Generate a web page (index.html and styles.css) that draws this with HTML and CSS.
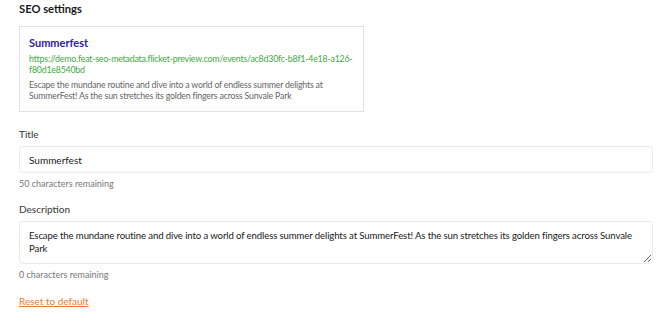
FILE: index.html
```html
<!DOCTYPE html>
<html lang="en">
<head>
  <meta charset="UTF-8" />
  <title>SEO settings</title>
  <link rel="stylesheet" href="styles.css">
</head>
<body>
  <div class="seo">
    <h3>SEO settings</h3>

    <!-- Search preview -->
    <div class="preview">
      <div class="preview-title">Summerfest</div>
      <div class="preview-url">https://demo.feat-seo-metadata.flicket-preview.com/events/ac8d30fc-b8f1-4e18-a126-f80d1e8540bd</div>
      <div class="preview-desc">Escape the mundane routine and dive into a world of endless summer delights at SummerFest! As the sun stretches its golden fingers across Sunvale Park</div>
    </div>

    <div class="field">
      <label for="seoTitle">Title</label>
      <input id="seoTitle" type="text" value="Summerfest" />
      <div class="hint">50 characters remaining</div>
    </div>

    <div class="field last">
      <label for="seoDesc">Description</label>
      <textarea id="seoDesc" rows="2">Escape the mundane routine and dive into a world of endless summer delights at SummerFest! As the sun stretches its golden fingers across Sunvale Park</textarea>
      <div class="hint">0 characters remaining</div>
    </div>

    <a href="#" class="reset">Reset to default</a>
  </div>
</body>
</html>
```

FILE: styles.css
```css
body {
  margin: 0;
  font-family: Lato, "Noto Sans", sans-serif;
  color: #1a1a1a;
  background: #fff;
}

.seo {
  padding: 2px 17px 0 19px;
}

h3 {
  margin: 0 0 10px;
  font-size: 11.2px;
  font-weight: 700;
  line-height: 14px;
}

.preview {
  width: 325px;
  border: 1px solid #e2e2e2;
  padding: 9px 9px 10px;
  margin-bottom: 16px;
}

.preview-title {
  color: #2e22a6;
  font-weight: 700;
  font-size: 11px;
  line-height: 14px;
  margin-bottom: 3px;
}

.preview-url,
.preview-desc {
  font-size: 8.8px;
  line-height: 11px;
  letter-spacing: -0.2px;
}

.preview-url {
  color: #44a844;
  overflow-wrap: anywhere;
  margin-bottom: 4px;
}

.preview-desc {
  color: #666;
}

.field {
  margin-bottom: 14px;
}

.field.last {
  margin-bottom: 9px;
}

label {
  display: block;
  font-size: 10px;
  font-weight: 500;
  color: #444;
  line-height: 12px;
  margin-bottom: 6px;
}

input, textarea {
  display: block;
  box-sizing: border-box;
  width: 100%;
  font-family: inherit;
  font-size: 10px;
  color: #1a1a1a;
  border: 1px solid #ebebeb;
  border-radius: 4px;
  padding: 0 9px;
  outline: none;
}

input {
  height: 27px;
}

textarea {
  height: 43px;
  padding: 8px 9px;
  font-size: 9.6px;
  letter-spacing: -0.12px;
  line-height: 12.5px;
  resize: vertical;
}

.hint {
  margin-top: 5px;
  font-size: 9px;
  color: #777;
  line-height: 11px;
}

.reset {
  color: #f47a2b;
  font-size: 10px;
}
```
